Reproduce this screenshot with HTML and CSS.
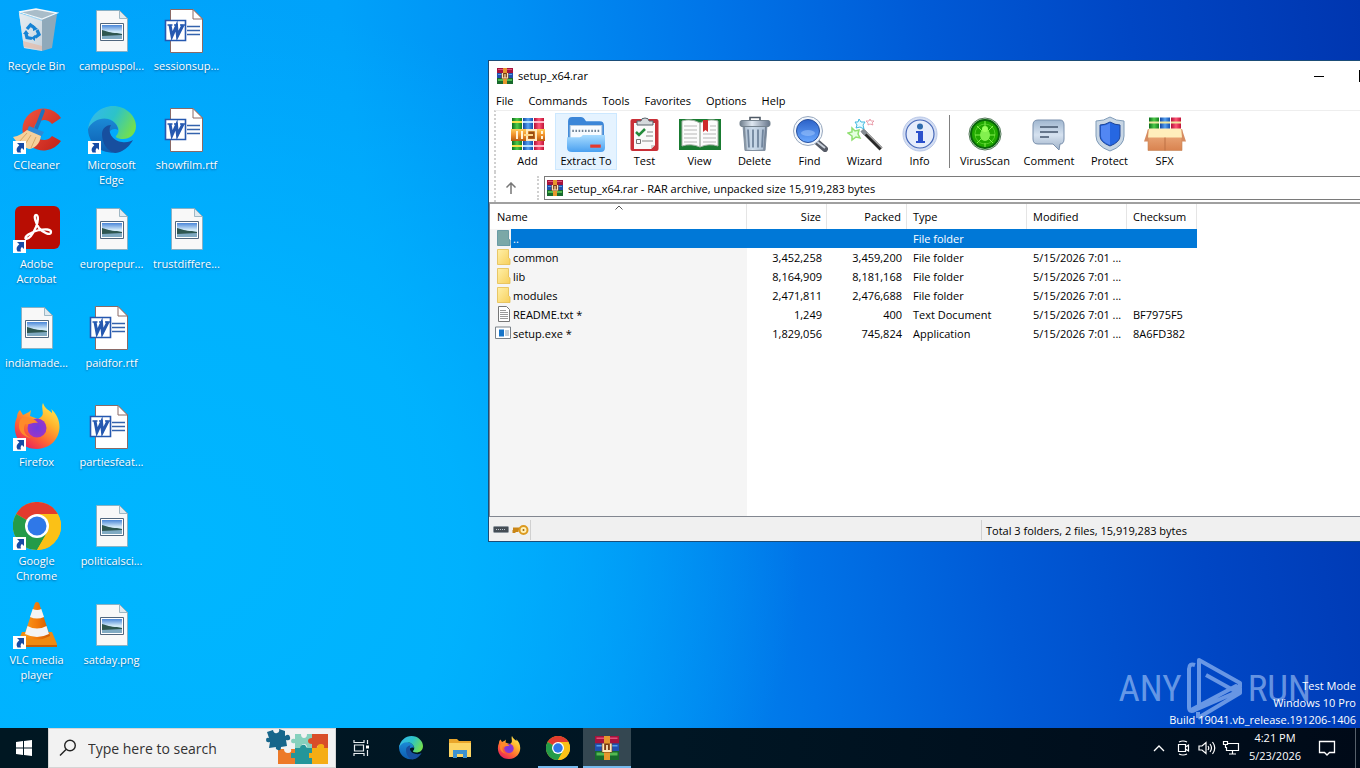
FILE: index.html
```html
<!DOCTYPE html>
<html lang="en">
<head>
<meta charset="utf-8">
<title>Desktop</title>
<link rel="stylesheet" href="styles.css">
</head>
<body>
<svg class="defs" width="0" height="0" aria-hidden="true">
<defs>
<linearGradient id="gBin" x1="0" x2="1" y2="1"><stop offset="0" stop-color="#f3f6f8"/><stop offset=".5" stop-color="#c3d6e2"/><stop offset="1" stop-color="#8aa5b8"/></linearGradient>
<linearGradient id="gPic" x1="0" x2="0" y1="0" y2="1"><stop offset="0" stop-color="#4a86d8"/><stop offset=".5" stop-color="#d5ecfa"/><stop offset="1" stop-color="#9cc6dc"/></linearGradient>
<linearGradient id="gEdgeTop" x1="0" x2="1" y1=".2" y2=".6"><stop offset="0" stop-color="#35b8ec"/><stop offset=".5" stop-color="#2cc3c9"/><stop offset="1" stop-color="#74e04c"/></linearGradient>
<linearGradient id="gEdgeL" x1="0" x2="0" y1="0" y2="1"><stop offset="0" stop-color="#1b8ad6"/><stop offset="1" stop-color="#0d5cb0"/></linearGradient>
<linearGradient id="gFox" x1=".9" x2=".2" y1="0" y2="1"><stop offset="0" stop-color="#fff15a"/><stop offset=".35" stop-color="#ffb52d"/><stop offset=".65" stop-color="#ff6a32"/><stop offset="1" stop-color="#e8185f"/></linearGradient>
<radialGradient id="gFoxIn"><stop offset="0" stop-color="#6f3be0"/><stop offset="1" stop-color="#9a35c8"/></radialGradient>
<linearGradient id="gCone" x1="0" x2="1"><stop offset="0" stop-color="#f99a1c"/><stop offset=".5" stop-color="#f37a0a"/><stop offset="1" stop-color="#cf5c02"/></linearGradient>
<linearGradient id="gCc" x1="0" x2="1" y2="1"><stop offset="0" stop-color="#f0553e"/><stop offset="1" stop-color="#c3211a"/></linearGradient>
<linearGradient id="gR" x1="0" x2="1"><stop offset="0" stop-color="#b01038"/><stop offset=".5" stop-color="#ff5575"/><stop offset="1" stop-color="#c01238"/></linearGradient>
<linearGradient id="gG" x1="0" x2="1"><stop offset="0" stop-color="#0c6d1d"/><stop offset=".5" stop-color="#4ecb4a"/><stop offset="1" stop-color="#157d20"/></linearGradient>
<linearGradient id="gB" x1="0" x2="1"><stop offset="0" stop-color="#1246a0"/><stop offset=".5" stop-color="#56a2f2"/><stop offset="1" stop-color="#1450ad"/></linearGradient>
<linearGradient id="gGold" x1="0" x2="0" y1="0" y2="1"><stop offset="0" stop-color="#ffce5c"/><stop offset=".5" stop-color="#f0902a"/><stop offset="1" stop-color="#b85a10"/></linearGradient>
<linearGradient id="gFold" x1="0" x2="0" y1="0" y2="1"><stop offset="0" stop-color="#a8dcff"/><stop offset="1" stop-color="#4aa0f0"/></linearGradient>
<linearGradient id="gSteel" x1="0" x2="1"><stop offset="0" stop-color="#6e7d8c"/><stop offset=".4" stop-color="#dfe8f2"/><stop offset="1" stop-color="#66758a"/></linearGradient>
<linearGradient id="gLens" x1="0" x2="0" y1="0" y2="1"><stop offset="0" stop-color="#2c62c8"/><stop offset="1" stop-color="#69a8ff"/></linearGradient>
<linearGradient id="gMsg" x1="0" x2="0" y1="0" y2="1"><stop offset="0" stop-color="#9fb6cf"/><stop offset=".5" stop-color="#d6e2f0"/><stop offset="1" stop-color="#9fb2c8"/></linearGradient>
<linearGradient id="gYel" x1="0" x2="1" y2="1"><stop offset="0" stop-color="#fff0a8"/><stop offset="1" stop-color="#f7cf5c"/></linearGradient>
<linearGradient id="gBox" x1="0" x2="0" y1="0" y2="1"><stop offset="0" stop-color="#efb183"/><stop offset="1" stop-color="#d98350"/></linearGradient>

<symbol id="shortcut" viewBox="0 0 13 13"><path fill="#fff" d="M0 0h13v13H0z"/><path fill="#174ba5" d="M4 2h7v7L9 7C7.500 8 7.300 9.500 8 11.500H4.500C2.800 9 3.500 6.500 6.300 4.300z"/></symbol>

<symbol id="bin" viewBox="0 0 48 48"><path fill="#8fa9ba" d="M29 12l15-5-5 34-10 3z"/><path fill="url(#gBin)" d="M6 6l23 8v30L11 41z"/><path fill="#a9bdc9" stroke="#f5f8fa" stroke-width="1.300" d="M6 5l17-3 21 4-15 6z"/><path fill="#dfe7ec" opacity=".7" d="M6 6l23 6v32l-18-3z"/><path fill="#e7b49c" opacity=".6" d="M10 34l19 5v4l-18-3z"/><g fill="none" stroke="#1683d4" stroke-width="3.300"><path d="M14 22l3.500-4 4 3M24 23l2 4.500-4 3M19 31.500l-5-1-1-4"/></g><g fill="#1683d4"><path d="M20 18l5 4-5 2zM22 34l-4-3 4-3zM10 27l3-4 3 4z"/></g></symbol>

<symbol id="picfile" viewBox="0 -1 48 48"><path fill="#f8f8f8" stroke="#8ba8b8" stroke-width=".8" d="M8.500 2.500h23l8 8v33h-31z"/><path fill="#dfeaf0" stroke="#8ba8b8" stroke-width=".8" d="M31.500 2.500v8h8z"/><path fill="#fff" stroke="#50667e" d="M12.500 15.500h23v17h-23z"/><path fill="url(#gPic)" d="M14 17h20v14H14z"/><path fill="#2e5650" d="M14 22c5 1 8 3 15 3l5 1v2H14z"/><path fill="#80aac2" d="M14 28l20-1v4H14z"/></symbol>

<symbol id="wordfile" viewBox="1 -1 48 48"><path fill="#fff" stroke="#8a6a66" d="M8.500 1.500h22.500l9.500 9.500v33.500h-32z"/><path fill="#fff" stroke="#8a6a66" d="M31 1.500v9.500h9.500z"/><path stroke="#3463ad" stroke-width="1.300" d="M25 18.500h13M25 22.500h13M25 26.500h13"/><path fill="#fff" stroke="#2558b0" stroke-width="1.600" d="M3.500 12.500h20v20h-20z"/><path fill="none" stroke="#2558b0" stroke-width="3" d="M8 17l2 11 4.500-10 1 10L21 17"/><path stroke="#2558b0" stroke-width="1.500" d="M5.500 17h5M12 17h4M18 17h5"/></symbol>

<symbol id="ccleaner" viewBox="0 0 48 48"><path fill="url(#gCc)" d="M48 12A21 21 0 1 0 48 35l-9-5a10 10 0 1 1 0-12z"/><path stroke="#1e73be" stroke-width="3.600" stroke-linecap="round" d="M30 5L23 23"/><path fill="#2f8ad5" d="M16 20l15 6-3 5-14-6z"/><path fill="#f5d09b" d="M14 24l14 6c-1 8-7 13-12 13C9 41 3 36 0 31c6-1 10-4 14-7z"/><path stroke="#d6a867" d="M14 27L6 36M18 29l-7 11M23 31l-5 11" fill="none"/></symbol>

<symbol id="edge" viewBox="0 0 48 48"><path fill="url(#gEdgeL)" d="M0 24C0 14 11 10 20 13c8 2 10 7 10 11-5-3-12 2-10 10 2 7 8 10 15 10A24 24 0 0 1 0 24z"/><path fill="#174f9f" d="M14 28c0-6 5-9 9-9-4 6 1 16 11 17 5 1 9-1 11-2 0 0-6 12-18 13-8-2-13-10-13-19z"/><path fill="url(#gEdgeTop)" d="M0 23C2 9 13 0 25 0c13 0 23 10 23 20 0 9-7 13-13 13-5 0-8-2-7-3 4-4 3-9-1-13C20 9 5 12 0 23z"/></symbol>

<symbol id="acrobat" viewBox="0 0 48 48"><rect x="2" y="1" width="45" height="43" rx="6" fill="#b80d03"/><path fill="none" stroke="#fff" stroke-width="2.300" stroke-linejoin="round" d="M23 10c3 0 2 7 0 12-3 7-7 12-10 12-3-2 5-7 13-9 6-1 12-1 12 2 0 4-8 1-12-4-3-4-6-13-3-13z"/></symbol>

<symbol id="firefox" viewBox="0 0 48 48"><path fill="url(#gFox)" d="M30 0c2 6 6 7 9 10 0-1 0-3-1-4 15 12 10 39-14 40C4 46-2 27 4 14c0-3 1-5 3-7l3 5 6-3 2-2-1 6 8 3c9-4 2-10 5-16z"/><circle cx="24" cy="25" r="9.500" fill="url(#gFoxIn)"/><path fill="#ff8a2a" d="M9 15c6-2 12 0 16 5-6-1-8 2-13 1-3 7 1 12 6 14-7-1-12-6-12-12 0-4 1-7 3-8z"/></symbol>

<symbol id="chrome" viewBox="0 0 48 48"><circle cx="24" cy="24" r="24" fill="#fbc116"/><path fill="#e33b2e" d="M24 24L3.200 12a24 24 0 0 1 41.600 0z"/><path fill="#249b49" d="M24 24L3.200 12A24 24 0 0 0 24 48l10.400-18z"/><path fill="#fbc116" d="M24 12h20.800A24 24 0 0 1 24 48l10.400-18z"/><circle cx="24" cy="24" r="12" fill="#fff"/><circle cx="24" cy="24" r="9.500" fill="#2f78e8"/></symbol>

<symbol id="vlc" viewBox="0 0 48 48"><path fill="#ef8a12" d="M9 31h30l5 12-1 3H5l-1-3z"/><path fill="#c75f06" d="M4 44h40v2H4z"/><path fill="url(#gCone)" d="M22 2q2-2 4 0l11 33q-13 7-26 0z"/><path fill="#f4f4f4" d="M19.700 8q4.500 2 8.600 0l2.700 8q-7 3-14 0zM14.500 25q9.500 5 19 0l2.500 8q-12 6-24 0z"/></symbol>

<symbol id="rar" viewBox="0 0 34 34"><path fill="url(#gG)" d="M1 1h10v32H1z"/><path fill="url(#gB)" d="M12 1h10v32H12z"/><path fill="url(#gR)" d="M23 1h10v32H23z"/><path fill="#f6e04a" d="M1 4h10v2H1zM1 28h10v2H1z"/><path fill="#b8e2ff" d="M12 4h10v2H12zM12 28h10v2H12z"/><path fill="#ffb8c8" d="M23 4h10v2H23zM23 28h10v2H23z"/><path fill="url(#gGold)" d="M0 12h34v12H0z"/><path fill="#fff3d8" d="M5 14h2v8H5zM10 14h2v8h-2zM30 14h2v3h-2zM30 19h2v3h-2z"/><path fill="none" stroke="#ffeac0" stroke-width="2" d="M16 13h9v10h-9z"/><path fill="#9a4c12" d="M17.500 14.500h6v7h-6z"/><path fill="#ffd98a" d="M13 17h9v2h-9z"/></symbol>

<symbol id="rarsmall" viewBox="0 0 16 16"><path fill="#a5133c" d="M0 0h16v5H0z"/><path fill="#e05078" d="M1 1h14v1H1z"/><path fill="#214fae" d="M0 5h16v5H0z"/><path fill="#57a0e8" d="M1 6h14v1H1z"/><path fill="#176a2c" d="M0 10h16v6H0z"/><path fill="#53b950" d="M1 11h14v2H1z"/><path fill="#e6972d" d="M6 0h4v16H6z"/><path fill="#7a3b14" d="M4.500 5h7v6h-7z"/><path fill="none" stroke="#ffe7b8" stroke-width="1.200" d="M5.500 5v5h5V5M8 6v4"/></symbol>

<symbol id="extract" viewBox="0 0 36 34"><path fill="#3b86d8" d="M1 5q0-4 4-4h8q3 0 5 4h13q4 0 4 4v20H1z"/><path fill="#f7fbff" stroke="#b6cbe0" d="M3 9h30v14H3z"/><path stroke="#6f8295" stroke-dasharray="1.500 1.500" stroke-width="2" d="M5 14h26"/><path fill="url(#gFold)" d="M0 20h12q2 0 3-2h21v12q0 4-4 4H5q-5 0-5-4z"/><path fill="#e8392c" d="M22 27h10v3H22z"/></symbol>

<symbol id="test" viewBox="0 0 30 34"><rect x=".5" y="2" width="28" height="32" rx="2" fill="#c92f37"/><path fill="#fafafa" d="M4 6h21v22l-4 4H4z"/><path fill="#cfcfcf" d="M21 32v-4h4z"/><path fill="#d5d9dc" stroke="#59636b" d="M7 8V4h4q0-3 4-3t4 3h4v4z"/><path fill="none" stroke="#258b3c" stroke-width="2.500" d="M6 15l3 3 6-6"/><path stroke="#888" d="M17 15h6M16 19h7M12 24h11"/><path fill="none" stroke="#777" d="M6.500 22.500h4v4h-4z"/></symbol>

<symbol id="view" viewBox="0 0 42 34"><path fill="#197b31" d="M0 2h42v31H0z"/><path fill="#fcfcfc" stroke="#aab5aa" d="M3 4q9-3 18 2v24q-9-4-18-1zM39 4q-9-3-18 2v24q9-4 18-1z"/><path stroke="#b6b6b6" d="M5 9h13M5 13h13M5 17h13M5 21h13M5 25h13M24 17h13M24 21h13M24 25h13M31 9h6M31 13h6"/><path fill="#ce2a2a" d="M24 3h5v12l-2.500-2-2.500 2z"/></symbol>

<symbol id="trash" viewBox="0 0 32 35"><path fill="none" stroke="#4f5a66" stroke-width="1.600" d="M11 4V1h10v3"/><path fill="url(#gSteel)" stroke="#8291a2" d="M4 9h24l-2 25H6z"/><path fill="#c5d7ea" opacity=".7" d="M6 10h20l-2 23H8z"/><path stroke="#71859d" stroke-width="1.800" d="M9 13l1 18M14 13v18M19 13v18M24 13l-1 18"/><rect x="1" y="4" width="30" height="6" rx="2" fill="url(#gSteel)" stroke="#75838f"/></symbol>

<symbol id="find" viewBox="0 0 36 36"><path stroke="#565b66" stroke-width="6" stroke-linecap="round" d="M25 26l8 7"/><path stroke="#c9d0db" stroke-width="2" d="M24 25l9 7"/><circle cx="16" cy="15" r="14.500" fill="#f3f7fc" stroke="#98a8be"/><circle cx="16" cy="15" r="11.500" fill="url(#gLens)" stroke="#274f9d"/><ellipse cx="16" cy="17" rx="7" ry="3" fill="#a6cbff" opacity=".5"/></symbol>

<symbol id="wizard" viewBox="0 0 36 36"><path stroke="#292929" stroke-width="4" d="M16 15l18 18"/><path stroke="#a8a8a8" stroke-width="1.200" d="M17 14l18 18"/><path stroke="#858b91" stroke-width="4.500" d="M15 14l4 4"/><path fill="#e5ffe0" stroke="#8fe070" stroke-width="1.500" d="M5 12l3 3 4-1-1 4 2 4-4-1-4 3v-4l-4-3 4-1z"/><path fill="#e6fbff" stroke="#42b8df" d="M12 3l2 3h4l-2 3 1 4-4-2-4 1 1-3-2-3h3z"/><path fill="#fff" stroke="#e68a9a" stroke-width=".8" d="M23 3l1 2h3l-2 2 1 2-3-1-2 1v-2l-2-2h3z"/></symbol>

<symbol id="info" viewBox="0 0 36 36"><circle cx="18" cy="18" r="17" fill="#d4def3" stroke="#b9c8e8"/><circle cx="18" cy="18" r="14" fill="#e6edfb" stroke="#4668b8" stroke-width="1.200"/><circle cx="18" cy="10.500" r="3" fill="#2f6cae"/><path fill="#2b50cc" d="M14 15h7v10h2v2h-9v-2h2v-8h-2z"/></symbol>

<symbol id="virus" viewBox="0 0 34 34"><circle cx="17" cy="17" r="16" fill="#dcecdc" stroke="#54795a"/><circle cx="17" cy="17" r="14" fill="#20a800" stroke="#08640a" stroke-width="2"/><g stroke="#83f04f" fill="none"><circle cx="17" cy="17" r="10" opacity=".5"/><path d="M9 9l5 5M25 9l-5 5M7 18h6M27 18h-6M9 26l5-5M25 26l-5-5M17 4v5M17 26v4"/></g><ellipse cx="17" cy="18" rx="5" ry="6" fill="#83f04f"/><circle cx="17" cy="12" r="3" fill="#9aff5c"/></symbol>

<symbol id="comment" viewBox="0 0 34 34"><path fill="url(#gMsg)" stroke="#798fac" d="M6 3h22q4 0 4 5v14q0 5-4 5l-1 6-6-6H6q-5 0-5-5V8q0-5 5-5z"/><path stroke="#44566c" stroke-width="1.500" d="M8 10h18M8 15h18M8 20h9"/></symbol>

<symbol id="protect" viewBox="0 0 32 36"><path fill="#c8d6e4" stroke="#7f9bb8" d="M16 1q6 4 14 4v15q0 10-14 15Q2 30 2 20V5q8 0 14-4z"/><path fill="#2667e2" stroke="#1e4598" d="M16 6q5 3 10 3v11q0 6-10 10Q6 26 6 20V9q5 0 10-3z"/><path fill="#6f9cff" opacity=".6" d="M16 7v22q-9-4-9-9V10q5 0 9-3z"/></symbol>

<symbol id="sfx" viewBox="0 0 42 35"><path fill="url(#gG)" d="M5 1h10v14H5z"/><path fill="url(#gB)" d="M16 1h10v14H16z"/><path fill="url(#gR)" d="M27 1h10v14H27z"/><path fill="#efe7a0" d="M5 5h10v2H5zM16 5h10v2H16zM27 5h10v2H27z"/><path fill="url(#gBox)" stroke="#c58356" stroke-width=".6" d="M4 13h34v21H4z"/><path fill="#ffeebc" d="M5 12h32l1 9H4z"/><path fill="#d68c61" d="M4 13v12H0zM38 13v12h4z"/><path stroke="#bd7044" d="M21 21v13"/></symbol>

<symbol id="folder" viewBox="0 0 14 16"><path fill="url(#gYel)" stroke="#e4bd4c" stroke-width=".8" d="M.5.500h11V9l1.500 1v5.500H.5z"/></symbol>
<symbol id="folderSel" viewBox="0 0 14 16"><path fill="#7ba8a7" stroke="#568e9b" stroke-width=".8" d="M.5.500h11V9l1.500 1v5.500H.5z"/></symbol>
<symbol id="textfile" viewBox="0 0 14 16"><path fill="#fff" stroke="#777" d="M1.500.500h8l3 3v12h-11z"/><path stroke="#999" d="M3 4.500h6M3 6.500h8M3 8.500h8M3 10.500h8M3 12.500h8"/></symbol>
<symbol id="exefile" viewBox="0 0 16 13"><path fill="#fff" stroke="#7a8289" d="M.5.500h15v11.500H.5z"/><path fill="#1674c8" d="M4 3h5v7H4z"/><path stroke="#8ba0b2" d="M10 4.500h4M10 6.500h4M10 8.500h4"/></symbol>
<symbol id="explorer" viewBox="0 0 24 24"><path fill="#e9a52b" d="M1 3h8l2 2h12v4H1z"/><path fill="#fcd464" d="M1 7h22v14H1z"/><path fill="#3c91d0" d="M5 14h14v8h-4v-4H9v4H5z"/></symbol>
<symbol id="puzzle" viewBox="0 0 64 38"><path fill="#86d1bd" d="M29 5h6q0 4 3 4t3-4h5v14h-5q0-4-3-4t-3 4h-6v-5q-4 1-4-2t4-2z"/><path fill="#d94e29" d="M46 5h16v14h-4q0-4-4-3t-3 3h-5v-4q-4 0-4-3t4-3z"/><path fill="#ed7a28" d="M12 20h6q0 4 4 4t3-4h4v15H12z"/><path fill="#23969a" d="M29 19h5q1-4 5-3l2 3h6v16H29v-6h-4v-5h4z"/><path fill="#f5ad14" d="M46 19h5q0-4 4-4t3 4h4v16H46v-6h-3v-5h3z"/><path fill="#17668b" d="M1 3l6-2q1 4 4 3t2-4l6 2v5q4-3 5 1t-4 3l1 6-6 1q0 4-3 3t-2-3l-7 1 1-6q-4 1-4-2t3-2z"/></symbol>
</defs>
</svg>

<main class="desktop">
  <section class="icons" aria-label="Desktop icons">
    <button class="item"><svg class="pic"><use href="#bin"/></svg><span>Recycle Bin</span></button>
    <button class="item"><span class="art"><svg class="pic"><use href="#ccleaner"/></svg><svg class="arrow"><use href="#shortcut"/></svg></span><span>CCleaner</span></button>
    <button class="item"><span class="art"><svg class="pic"><use href="#acrobat"/></svg><svg class="arrow"><use href="#shortcut"/></svg></span><span>Adobe Acrobat</span></button>
    <button class="item"><svg class="pic"><use href="#picfile"/></svg><span>indiamade...</span></button>
    <button class="item"><span class="art"><svg class="pic"><use href="#firefox"/></svg><svg class="arrow"><use href="#shortcut"/></svg></span><span>Firefox</span></button>
    <button class="item"><span class="art"><svg class="pic"><use href="#chrome"/></svg><svg class="arrow"><use href="#shortcut"/></svg></span><span>Google Chrome</span></button>
    <button class="item"><span class="art"><svg class="pic"><use href="#vlc"/></svg><svg class="arrow"><use href="#shortcut"/></svg></span><span>VLC media player</span></button>
    <button class="item"><svg class="pic"><use href="#picfile"/></svg><span>campuspol...</span></button>
    <button class="item"><span class="art"><svg class="pic"><use href="#edge"/></svg><svg class="arrow"><use href="#shortcut"/></svg></span><span>Microsoft Edge</span></button>
    <button class="item"><svg class="pic"><use href="#picfile"/></svg><span>europepur...</span></button>
    <button class="item"><svg class="pic"><use href="#wordfile"/></svg><span>paidfor.rtf</span></button>
    <button class="item"><svg class="pic"><use href="#wordfile"/></svg><span>partiesfeat...</span></button>
    <button class="item"><svg class="pic"><use href="#picfile"/></svg><span>politicalsci...</span></button>
    <button class="item"><svg class="pic"><use href="#picfile"/></svg><span>satday.png</span></button>
    <button class="item"><svg class="pic"><use href="#wordfile"/></svg><span>sessionsup...</span></button>
    <button class="item"><svg class="pic"><use href="#wordfile"/></svg><span>showfilm.rtf</span></button>
    <button class="item"><svg class="pic"><use href="#picfile"/></svg><span>trustdiffere...</span></button>
  </section>

  <section class="window" aria-label="setup_x64.rar">
    <header class="titlebar">
      <svg class="small"><use href="#rarsmall"/></svg>
      <h1>setup_x64.rar</h1>
      <button class="caption" aria-label="Minimize"><svg width="10" height="10"><path stroke="#000" d="M0 5.500h10"/></svg></button>
      <button class="maximize" aria-label="Maximize"></button>
    </header>
    <nav class="menu">
      <button>File</button><button>Commands</button><button>Tools</button><button>Favorites</button><button>Options</button><button>Help</button>
    </nav>
    <div class="toolbar">
      <button class="tool"><svg width="34" height="36"><use href="#rar"/></svg>Add</button>
      <button class="tool wide active"><svg width="38" height="36"><use href="#extract"/></svg>Extract To</button>
      <button class="tool"><svg width="30" height="36"><use href="#test"/></svg>Test</button>
      <button class="tool"><svg width="42" height="36"><use href="#view"/></svg>View</button>
      <button class="tool"><svg width="32" height="36"><use href="#trash"/></svg>Delete</button>
      <button class="tool"><svg width="36" height="36"><use href="#find"/></svg>Find</button>
      <button class="tool"><svg width="36" height="36"><use href="#wizard"/></svg>Wizard</button>
      <button class="tool"><svg width="36" height="36"><use href="#info"/></svg>Info</button>
      <span class="divider"></span>
      <button class="tool wide"><svg width="34" height="36"><use href="#virus"/></svg>VirusScan</button>
      <button class="tool wider"><svg width="34" height="36"><use href="#comment"/></svg>Comment</button>
      <button class="tool"><svg width="32" height="36"><use href="#protect"/></svg>Protect</button>
      <button class="tool"><svg width="42" height="36"><use href="#sfx"/></svg>SFX</button>
    </div>
    <div class="address">
      <button class="up" aria-label="Up one level"><svg width="12" height="12" fill="none" stroke="#777" stroke-width="1.500"><path d="M6 12V1M1.500 5.500L6 1l4.500 4.500"/></svg></button>
      <div class="path"><svg class="small"><use href="#rarsmall"/></svg><span>setup_x64.rar - RAR archive, unpacked size 15,919,283 bytes</span></div>
    </div>
    <div class="list">
      <table>
        <colgroup><col class="c-name"><col class="c-num"><col class="c-num"><col class="c-type"><col class="c-date"><col class="c-sum"></colgroup>
        <thead><tr><th class="sorted">Name<svg width="8" height="5" fill="none" stroke="#555"><path d="M.5 4.500L4 1l3.500 3.500"/></svg></th><th class="num">Size</th><th class="num">Packed</th><th>Type</th><th>Modified</th><th>Checksum</th></tr></thead>
        <tbody>
          <tr class="selected"><td class="name"><div><svg><use href="#folderSel"/></svg><span>..</span></div></td><td></td><td></td><td>File folder</td><td></td><td></td></tr>
          <tr><td class="name"><div><svg><use href="#folder"/></svg><span>common</span></div></td><td class="num">3,452,258</td><td class="num">3,459,200</td><td>File folder</td><td>5/15/2026 7:01 ...</td><td></td></tr>
          <tr><td class="name"><div><svg><use href="#folder"/></svg><span>lib</span></div></td><td class="num">8,164,909</td><td class="num">8,181,168</td><td>File folder</td><td>5/15/2026 7:01 ...</td><td></td></tr>
          <tr><td class="name"><div><svg><use href="#folder"/></svg><span>modules</span></div></td><td class="num">2,471,811</td><td class="num">2,476,688</td><td>File folder</td><td>5/15/2026 7:01 ...</td><td></td></tr>
          <tr><td class="name"><div><svg><use href="#textfile"/></svg><span>README.txt *</span></div></td><td class="num">1,249</td><td class="num">400</td><td>Text Document</td><td>5/15/2026 7:01 ...</td><td>BF7975F5</td></tr>
          <tr><td class="name"><div><svg class="exe"><use href="#exefile"/></svg><span>setup.exe *</span></div></td><td class="num">1,829,056</td><td class="num">745,824</td><td>Application</td><td>5/15/2026 7:01 ...</td><td>8A6FD382</td></tr>
        </tbody>
      </table>
    </div>
    <footer class="status">
      <div class="flags">
        <svg width="16" height="10"><rect x=".5" y="1.500" width="15" height="6" rx="1" fill="#454d55" stroke="#8b949c"/><path stroke="#b9c3cc" stroke-dasharray="1 1" d="M3 4.500h10"/></svg>
        <svg width="17" height="12" fill="none"><path stroke="#c98516" stroke-width="3" d="M1 5h8M2 6v3M5 6v2"/><circle cx="11.500" cy="6" r="4" fill="#fff0b8" stroke="#dc9a20" stroke-width="2"/><circle cx="11.500" cy="6" r="1" fill="#9e650b"/></svg>
      </div>
      <div class="blank"></div>
      <div class="total">Total 3 folders, 2 files, 15,919,283 bytes</div>
    </footer>
  </section>

  <div class="brand">
    <span>ANY</span>
    <svg width="58" height="62" viewBox="0 0 58 62" fill="none" stroke="currentColor" stroke-width="4" stroke-linejoin="round"><path d="M9 7q-6-2-6 4v38q0 6 6 3l44-19M13 9v38M13 12V2l41 23v4l-7 3-27-15M12 60l42-25v-5l-4-2L5 52M12 60v-6"/></svg>
    <span>RUN</span>
  </div>
  <div class="build"><p>Test Mode</p><p>Windows 10 Pro</p><p>Build 19041.vb_release.191206-1406</p></div>
</main>

<footer class="taskbar">
  <button class="start" aria-label="Start"><svg width="16" height="16" fill="#fff"><path d="M0 2l7-1v6.500H0zM8 1l8-1v7.500H8zM0 8.500h7V15l-7-1zM8 8.500h8V16l-8-1z"/></svg></button>
  <label class="search">
    <svg width="18" height="18" fill="none" stroke="#222" stroke-width="1.400"><circle cx="11" cy="6.500" r="5.300"/><path d="M7 10.500L1 16.500"/></svg>
    <input type="text" aria-label="Type here to search" placeholder="Type here to search">
    <svg width="64" height="38"><use href="#puzzle"/></svg>
  </label>
  <div class="apps">
    <button class="tasks" aria-label="Task View"><svg width="18" height="18" fill="none" stroke="#e8edf0" stroke-width="1.200"><path d="M2 1v2.500h10V1M2.500 6h9v6h-9zM2 17v-2.500h10V17M15.500 1v4M15.500 11v6"/><path fill="#fff" stroke="none" d="M14 6.500h3v3h-3z"/></svg></button>
    <button aria-label="Microsoft Edge"><svg width="24" height="24"><use href="#edge"/></svg></button>
    <button aria-label="File Explorer"><svg width="24" height="24"><use href="#explorer"/></svg></button>
    <button aria-label="Firefox"><svg width="24" height="24"><use href="#firefox"/></svg></button>
    <button class="running" aria-label="Google Chrome"><svg width="24" height="24"><use href="#chrome"/></svg></button>
    <button class="current" aria-label="WinRAR"><svg width="24" height="24"><use href="#rarsmall"/></svg></button>
  </div>
  <div class="tray">
    <button aria-label="Show hidden icons"><svg width="12" height="8" fill="none" stroke="#fff" stroke-width="1.300"><path d="M1 7l5-5 5 5"/></svg></button>
    <button aria-label="Meet Now"><svg width="14" height="16" fill="none" stroke="#fff" stroke-width="1.200"><path d="M3 2q4-2 8 0M3 14q4 2 8 0M2.500 4.500h7v7h-7zM9.500 7l3-2v6l-3-2"/></svg></button>
    <button aria-label="Volume"><svg width="18" height="16" fill="none" stroke="#fff" stroke-width="1.200"><path d="M1 6h3l4-3.500v11L4 10H1zM10 6q1.500 2 0 4M12 4q3 4 0 8M14.500 2q4.500 6 0 12"/></svg></button>
    <button aria-label="Network"><svg width="18" height="16" fill="none" stroke="#fff" stroke-width="1.200"><path d="M6 3.500h10.500v7H4.500V7M10.500 10.500v3M7 14h7M1.500 1.500h4v3h-4zM3.500 5v3"/></svg></button>
    <time class="clock"><span>4:21 PM</span><span>5/23/2026</span></time>
    <button class="notes" aria-label="Notifications"><svg width="18" height="18" fill="none" stroke="#fff" stroke-width="1.300"><path d="M1.500 2.500h15v11h-5L9 16l-2.500-2.500h-5z"/></svg></button>
    <button class="peek" aria-label="Show desktop"></button>
  </div>
</footer>
</body>
</html>
```
FILE: styles.css
```css
* { box-sizing: border-box; }
html, body { height: 100%; }
body {
  margin: 0;
  display: flex;
  flex-direction: column;
  overflow: hidden;
  font: 11px/15px "Open Sans", "Noto Sans", sans-serif;
  color: #000;
}
button { padding: 0; border: 0; background: none; color: inherit; font: inherit; }
svg { display: block; flex: none; }
.defs { position: absolute; }

.desktop {
  position: relative;
  flex: 1;
  min-height: 0;
  overflow: hidden;
  background:
    radial-gradient(ellipse 45% 75% at 14% 75%, #00b6ff 0%, rgba(0, 182, 255, .8) 45%, rgba(0, 178, 255, 0) 100%),
    linear-gradient(82deg, #00a6fd 0%, #00a2fa 30%, #0090f4 42%, #0074e8 56%, #005ad6 70%, #0046c4 84%, #0036b0 100%);
}
.icons {
  display: grid;
  grid-template-rows: repeat(7, 99px);
  grid-auto-flow: column;
  grid-auto-columns: 75px;
  justify-content: start;
  padding-top: 7px;
  margin-left: -1px;
}
.item {
  display: flex;
  flex-direction: column;
  align-items: center;
  gap: 3px;
  color: #fff;
  text-align: center;
  text-shadow: 0 1px 2px rgba(0, 40, 90, .6);
}
.pic { width: 48px; height: 48px; }
.art { position: relative; }
.arrow { position: absolute; left: 0; bottom: 0; width: 13px; height: 13px; }

.window {
  position: absolute;
  left: 488px;
  right: 0;
  top: 60px;
  overflow: hidden;
  background: #fff;
  border: 1px solid #1b4d78;
  border-right: 0;
}
.small { width: 16px; height: 16px; }
.titlebar { display: flex; align-items: center; height: 29px; padding-left: 8px; }
.titlebar h1 { flex: 1; margin: 0 0 0 5px; font-size: 11px; font-weight: 400; }
.caption { width: 45px; display: flex; justify-content: center; }
.maximize { width: 19px; }
.maximize::before { content: ""; display: block; width: 10px; height: 10px; margin-left: 18px; border: 1px solid #000; }
.menu { display: flex; gap: 15px; height: 20px; padding-left: 7px; align-items: center; }
.toolbar {
  display: flex;
  height: 62px;
  padding: 2px 0 0 4px;
  margin-left: 5px;
  border-top: 1px solid #eee;
  border-left: 2px dotted #d0d0d0;
}
.tool {
  width: 55px;
  height: 57px;
  display: flex;
  flex: none;
  flex-direction: column;
  align-items: center;
  gap: 1px;
  padding-top: 3px;
}
.wide { width: 62px; }
.wider { width: 66px; }
.active { background: #e5f3ff; outline: 1px solid #cce8ff; outline-offset: -1px; }
.divider { width: 1px; margin: 2px 4px 4px 2px; background: #808080; }
.address {
  display: flex;
  height: 30px;
  padding: 4px 0 2px;
  margin-left: 5px;
  border-left: 2px dotted #d0d0d0;
}
.up { width: 43px; display: flex; align-items: center; justify-content: center; padding-right: 11px; border-right: 2px dotted #d0d0d0; }
.path { flex: 1; display: flex; align-items: center; gap: 5px; margin-left: 5px; padding-left: 2px; border: 1px solid #7a7a7a; border-right: 0; }
.list {
  min-height: 315px;
  border: solid #828790;
  border-width: 2px 0 1px 1px;
  border-top-color: #a0a0a0;
  background: linear-gradient(#f5f5f5, #f5f5f5) 0 0 / 257px 100% no-repeat;
}
table { width: 707px; table-layout: fixed; border-collapse: separate; border-spacing: 0; }
.c-name { width: 257px; }
.c-num { width: 80px; }
.c-type { width: 120px; }
.c-date { width: 100px; }
.c-sum { width: 70px; }
th, td { padding: 0 6px; font-weight: 400; text-align: left; white-space: nowrap; }
th { height: 25px; background: #fff; border-right: 1px solid #e5e5e5; }
th:first-child { padding-left: 7px; }
.sorted { position: relative; }
.sorted svg { position: absolute; top: 1px; left: 125px; }
td { height: 19px; }
.num { text-align: right; padding-right: 5px; }
.name { padding: 0; }
.name div { display: flex; height: 19px; padding-left: 7px; line-height: 19px; }
.name svg { width: 14px; height: 16px; margin-top: 1px; }
.name .exe { width: 16px; margin: 1px 0 0 -2px; }
.name span { flex: 1; padding-left: 2px; }
.selected td:not(.name), .selected span { background: #0078d7; color: #fff; }
.status { display: flex; height: 24px; padding-top: 1px; background: #f0f0f0; align-items: center; }
.flags { display: flex; align-items: center; gap: 3px; width: 42px; height: 20px; padding-left: 4px; border-right: 1px solid #d0d0d0; }
.blank { width: 451px; height: 20px; border-right: 1px solid #d0d0d0; }
.total { padding: 2px 0 0 4px; }

.brand {
  position: absolute;
  right: 49px;
  bottom: 8px;
  display: flex;
  align-items: center;
  gap: 4px;
  color: rgba(190, 217, 255, .55);
  font: 37px/62px "Roboto Condensed", "Liberation Sans Narrow", sans-serif;
}
.build { position: absolute; right: 4px; bottom: 0; color: #fff; text-align: right; line-height: 17px; }
.build p { margin: 0; }

.taskbar { display: flex; flex: none; height: 40px; background: linear-gradient(90deg, #001722, #001624 50%, #000a18); color: #fff; }
.taskbar button { display: flex; align-items: center; justify-content: center; }
.start { width: 48px; }
.search { display: flex; align-items: center; width: 288px; padding: 0 5px 0 10px; background: #f2f2f2; border: 1px solid #d5d5d5; }
.search input { flex: 1; min-width: 0; margin-left: 11px; padding: 1px 0 0; border: 0; background: none; font: 14px/20px "Open Sans", "Noto Sans", sans-serif; }
.search input::placeholder { color: #333; opacity: 1; }
.apps { display: flex; gap: 1px; }
.apps button { width: 48px; height: 40px; }
.apps .tasks { width: 50px; }
.apps .running { box-shadow: inset 0 -2px #76b9ed; width: 40px; margin: 0 4px; }
.apps .current { background: #344751; box-shadow: inset 0 -2px #76b9ed; }
.tray { display: flex; margin-left: auto; }
.tray button { width: 24px; }
.clock { display: flex; flex-direction: column; justify-content: center; width: 64px; text-align: center; line-height: 18px; padding-bottom: 3px; }
.tray .notes { width: 40px; }
.tray .peek { width: 5px; margin-left: 8px; border-left: 1px solid #57616b; }
```
